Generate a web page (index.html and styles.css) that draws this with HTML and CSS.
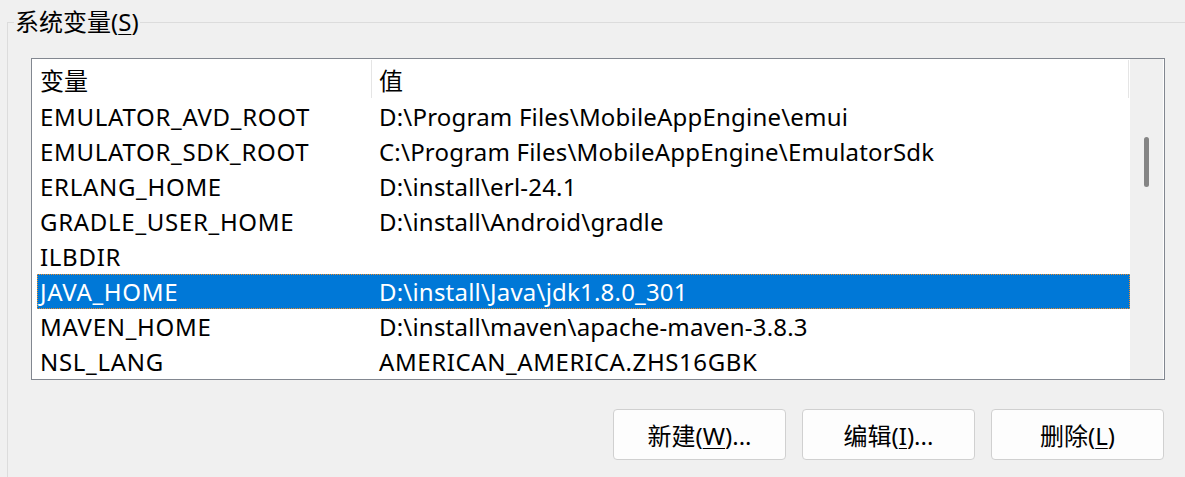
FILE: index.html
```html
<!DOCTYPE html>
<html lang="zh-CN">
<head>
<meta charset="utf-8">
<title>系统变量</title>
<link rel="stylesheet" href="styles.css">
</head>
<body>
<fieldset class="group">
  <legend class="group-title">系统变量(<u>S</u>)</legend>
  <div class="listview">
    <div class="list">
      <div class="header">
        <div class="hcell c1">变量</div>
        <div class="hcell c2">值</div>
      </div>
      <div class="rows">
        <div class="row"><span class="c1">EMULATOR_AVD_ROOT</span><span class="c2">D:\Program Files\MobileAppEngine\emui</span></div>
        <div class="row"><span class="c1">EMULATOR_SDK_ROOT</span><span class="c2">C:\Program Files\MobileAppEngine\EmulatorSdk</span></div>
        <div class="row"><span class="c1">ERLANG_HOME</span><span class="c2">D:\install\erl-24.1</span></div>
        <div class="row"><span class="c1">GRADLE_USER_HOME</span><span class="c2">D:\install\Android\gradle</span></div>
        <div class="row"><span class="c1">ILBDIR</span><span class="c2"></span></div>
        <div class="row selected"><span class="c1">JAVA_HOME</span><span class="c2">D:\install\Java\jdk1.8.0_301</span></div>
        <div class="row"><span class="c1">MAVEN_HOME</span><span class="c2">D:\install\maven\apache-maven-3.8.3</span></div>
        <div class="row"><span class="c1">NSL_LANG</span><span class="c2 caps">AMERICAN_AMERICA.ZHS16GBK</span></div>
      </div>
    </div>
    <div class="scrollbar"><div class="thumb"></div></div>
  </div>
  <div class="buttons">
    <button class="btn">新建(<u>W</u>)...</button>
    <button class="btn">编辑(<u>I</u>)...</button>
    <button class="btn">删除(<u>L</u>)</button>
  </div>
</fieldset>
</body>
</html>
```
FILE: styles.css
```css
html, body {
  margin: 0;
  padding: 0;
  background: #f0f0f0;
  overflow: hidden;
}
body {
  width: 1185px;
  height: 477px;
  font-family: "Noto Sans", "Noto Sans CJK SC", sans-serif;
  font-size: 24px;
  color: #000;
}
.group {
  margin: 7px 0 0 7px;
  padding: 0 0 0 23px;
  width: 1200px;
  height: 470px;
  border: 1px solid #dcdcdc;
  border-right: none;
  border-bottom: none;
  box-sizing: border-box;
}
.group-title {
  margin-left: -17px;
  padding: 0 1px;
  line-height: 30px;
  font-size: 24px;
}
u { text-decoration-thickness: 1px; text-underline-offset: 3px; }
.listview {
  margin-top: 21px;
  width: 1134px;
  height: 322px;
  box-sizing: border-box;
  border: 1px solid #828790;
  background: #fff;
  display: flex;
}
.list {
  flex: 1;
  display: flex;
  flex-direction: column;
  overflow: hidden;
}
.header {
  height: 40px;
  display: flex;
  align-items: stretch;
  background: #fff;
}
.hcell {
  display: flex;
  align-items: center;
  box-sizing: border-box;
}
.hcell.c1 {
  width: 340px;
  padding-left: 8px;
  border-right: 1px solid #e5e5e5;
  margin: 1px 0;
}
.hcell.c2 {
  flex: 1;
  padding-left: 7px;
  border-right: 1px solid #e5e5e5;
  margin: 1px 1px 1px 0;
}
.rows {
  margin-left: 5px;
  display: flex;
  flex-direction: column;
}
.row {
  height: 35px;
  display: flex;
  align-items: center;
  padding-left: 3px;
  box-sizing: border-box;
  white-space: nowrap;
}
.row .c1 { width: 339px; flex: none; letter-spacing: 0.7px; }
.row .c2 { flex: 1; letter-spacing: 0.2px; }
.row .c2.caps { letter-spacing: 0.6px; }
.row.selected {
  background: #0078d7;
  color: #fff;
  border: 1px dotted #f08c28;
  padding-left: 2px;
}
.scrollbar {
  width: 33px;
  background: #f0f0f0;
  border-right: 1px solid #fff;
  position: relative;
}
.thumb {
  position: absolute;
  left: 14px;
  top: 78px;
  width: 5px;
  height: 50px;
  border-radius: 3px;
  background: #858585;
}
.buttons {
  width: 1134px;
  margin-top: 29px;
  padding-right: 1px;
  box-sizing: border-box;
  display: flex;
  justify-content: flex-end;
  gap: 16px;
}
.btn {
  width: 173px;
  height: 51px;
  box-sizing: border-box;
  border: 1px solid #d0d0d0;
  border-radius: 4px;
  background: #fdfdfd;
  font-family: "Noto Sans", "Noto Sans CJK SC", sans-serif;
  font-size: 24px;
  color: #000;
  padding: 0;
}
```
